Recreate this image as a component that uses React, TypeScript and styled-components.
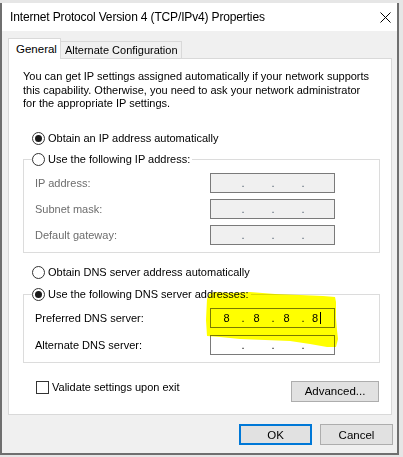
import React from 'react';
import styled, { createGlobalStyle } from 'styled-components';

const GlobalStyle = createGlobalStyle`
  html, body {
    margin: 0;
    padding: 0;
  }
  body {
    width: 403px;
    height: 457px;
    overflow: hidden;
    background: #e6e6e6;
    font-family: 'Liberation Sans', Arial, sans-serif;
    font-size: 11px;
    color: #000;
  }
`;

const Screen = styled.div`
  width: 403px;
  height: 457px;
  padding-top: 3px;
  box-sizing: border-box;
`;

const Window = styled.div`
  width: 399px;
  height: 452px;
  box-sizing: border-box;
  border: 2px solid #6f6f6f;
  border-top: none;
  display: flex;
  flex-direction: column;
  background: #f0f0f0;
`;

const TitleBar = styled.div`
  height: 28px;
  flex: none;
  display: flex;
  align-items: center;
  justify-content: space-between;
  padding-left: 8px;
  background: #fff;
`;

const Title = styled.span`
  font-size: 12px;
  letter-spacing: -0.15px;
`;

const CloseButton = styled.div`
  width: 24px;
  height: 28px;
  display: flex;
  align-items: center;
  justify-content: center;
`;

const Body = styled.div`
  flex: 1;
  display: flex;
  flex-direction: column;
  padding: 7px 0 0 6px;
`;

const TabStrip = styled.div`
  display: flex;
  align-items: flex-end;
  height: 21px;
  margin-bottom: -1px;
`;

const Tab = styled.div<{ $active?: boolean; $width: number; $pad: number; $size: number }>`
  position: relative;
  z-index: ${(p) => (p.$active ? 1 : 0)};
  width: ${(p) => p.$width}px;
  height: ${(p) => (p.$active ? 21 : 18)}px;
  box-sizing: border-box;
  display: flex;
  align-items: center;
  white-space: nowrap;
  padding-left: ${(p) => p.$pad}px;
  padding-bottom: ${(p) => (p.$active ? 1 : 0)}px;
  border: 1px solid #d9d9d9;
  border-bottom: ${(p) => (p.$active ? 'none' : '1px solid #d9d9d9')};
  border-left: ${(p) => (p.$active ? '1px solid #d9d9d9' : 'none')};
  background: ${(p) => (p.$active ? '#fff' : '#f0f0f0')};
  font-size: ${(p) => p.$size}px;
`;

const Panel = styled.div`
  position: relative;
  width: 384px;
  height: 357px;
  box-sizing: border-box;
  border: 1px solid #d9d9d9;
  background: #fff;
  padding: 11px 11px 0 14px;
  display: flex;
  flex-direction: column;
`;

const Intro = styled.p`
  margin: 0;
  line-height: 13.5px;
`;

const OptionRow = styled.label<{ $top: number }>`
  display: flex;
  align-items: center;
  gap: 3px;
  height: 15px;
  margin: ${(p) => p.$top}px 0 0 9px;
`;

const RadioCircle = styled.span<{ $checked?: boolean }>`
  width: 13px;
  height: 13px;
  box-sizing: border-box;
  border: 1px solid #333;
  border-radius: 50%;
  background: #fff;
  display: flex;
  align-items: center;
  justify-content: center;

  &::after {
    content: '';
    width: 7px;
    height: 7px;
    border-radius: 50%;
    background: ${(p) => (p.$checked ? '#1a1a1a' : 'transparent')};
  }
`;

const Group = styled.fieldset<{ $top: number }>`
  margin: ${(p) => p.$top}px 0 0 0;
  padding: 0;
  border: 1px solid #dcdcdc;
  min-width: 0;
`;

const Legend = styled.legend`
  margin-left: 8px;
  padding: 0 2px 0 0;
  height: 15px;
  display: flex;
  align-items: center;
  gap: 3px;
`;

const Fields = styled.div<{ $gap: number }>`
  display: flex;
  flex-direction: column;
  gap: ${(p) => p.$gap}px;
  padding: 6px 0 7px 11px;
`;

const FieldRow = styled.div`
  display: grid;
  grid-template-columns: 175px 125px;
  align-items: center;
  height: 20px;
`;

const FieldLabel = styled.span<{ $disabled?: boolean }>`
  color: ${(p) => (p.$disabled ? '#6d6d6d' : '#000')};
`;

const AddressBox = styled.div<{ $disabled?: boolean }>`
  width: 125px;
  height: 20px;
  box-sizing: border-box;
  border: 1px solid #7a7a7a;
  background: ${(p) => (p.$disabled ? '#f0f0f0' : '#fff')};
  display: grid;
  grid-template-columns: 24px 6px 24px 6px 24px 6px 24px;
  align-items: center;
  padding-left: 5px;
  line-height: 18px;
`;

const Octet = styled.span`
  padding-right: 3px;
  display: flex;
  align-items: center;
  justify-content: center;
`;

const Dot = styled.span<{ $disabled?: boolean }>`
  text-align: center;
  color: ${(p) => (p.$disabled ? '#4a5a6a' : '#000')};
`;

const Caret = styled.span`
  width: 1px;
  height: 12px;
  margin-left: 2px;
  background: #000;
`;

const BottomRow = styled.div`
  display: flex;
  justify-content: space-between;
  align-items: flex-start;
  margin-top: 18px;
  padding-right: 1px;
`;

const CheckRow = styled.label`
  display: flex;
  align-items: center;
  gap: 3px;
  margin: 0 0 0 13px;
  height: 13px;
`;

const CheckBox = styled.span`
  width: 13px;
  height: 13px;
  box-sizing: border-box;
  border: 1px solid #333;
  background: #fff;
`;

const Button = styled.div<{ $width: number; $default?: boolean }>`
  width: ${(p) => p.$width}px;
  height: 21px;
  box-sizing: border-box;
  border: ${(p) => (p.$default ? '2px solid #0078d7' : '1px solid #adadad')};
  background: #e1e1e1;
  display: flex;
  align-items: center;
  justify-content: center;
  font-size: 11.5px;
`;

const Footer = styled.div`
  display: flex;
  justify-content: flex-end;
  gap: 8px;
  margin-top: 9px;
  width: 385px;
`;

const Highlight = styled.svg`
  position: absolute;
  left: 196px;
  top: 231px;
  width: 135px;
  height: 60px;
  mix-blend-mode: multiply;
  pointer-events: none;
`;

function AddressInput({ values, disabled, caret }: { values?: string[]; disabled?: boolean; caret?: boolean }) {
  const parts = values ?? ['', '', '', ''];
  return (
    <AddressBox $disabled={disabled}>
      {parts.map((v, i) => (
        <React.Fragment key={i}>
          <Octet>
            {v}
            {caret && i === 3 && <Caret />}
          </Octet>
          {i < 3 && <Dot $disabled={disabled}>.</Dot>}
        </React.Fragment>
      ))}
    </AddressBox>
  );
}

export default function App() {
  return (
    <>
      <GlobalStyle />
      <Screen>
        <Window>
          <TitleBar>
            <Title>Internet Protocol Version 4 (TCP/IPv4) Properties</Title>
            <CloseButton>
              <svg width="11" height="11" viewBox="0 0 11 11">
                <path d="M0.5 0.5 L10.5 10.5 M10.5 0.5 L0.5 10.5" stroke="#000" strokeWidth="1" fill="none" />
              </svg>
            </CloseButton>
          </TitleBar>
          <Body>
            <TabStrip>
              <Tab $active $width={53} $pad={7} $size={11.5}>General</Tab>
              <Tab $width={121} $pad={4} $size={11}>Alternate Configuration</Tab>
            </TabStrip>
            <Panel>
              <Intro>
                You can get IP settings assigned automatically if your network supports
                <br />
                this capability. Otherwise, you need to ask your network administrator
                <br />
                for the appropriate IP settings.
              </Intro>

              <OptionRow $top={20}>
                <RadioCircle $checked />
                Obtain an IP address automatically
              </OptionRow>

              <Group $top={6}>
                <Legend>
                  <RadioCircle />
                  Use the following IP address:
                </Legend>
                <Fields $gap={6}>
                  <FieldRow>
                    <FieldLabel $disabled>IP address:</FieldLabel>
                    <AddressInput disabled />
                  </FieldRow>
                  <FieldRow>
                    <FieldLabel $disabled>Subnet mask:</FieldLabel>
                    <AddressInput disabled />
                  </FieldRow>
                  <FieldRow>
                    <FieldLabel $disabled>Default gateway:</FieldLabel>
                    <AddressInput disabled />
                  </FieldRow>
                </Fields>
              </Group>

              <OptionRow $top={12}>
                <RadioCircle />
                Obtain DNS server address automatically
              </OptionRow>

              <Group $top={7}>
                <Legend>
                  <RadioCircle $checked />
                  Use the following DNS server addresses:
                </Legend>
                <Fields $gap={7}>
                  <FieldRow>
                    <FieldLabel>Preferred DNS server:</FieldLabel>
                    <AddressInput values={['8', '8', '8', '8']} caret />
                  </FieldRow>
                  <FieldRow>
                    <FieldLabel>Alternate DNS server:</FieldLabel>
                    <AddressInput />
                  </FieldRow>
                </Fields>
              </Group>

              <BottomRow>
                <CheckRow>
                  <CheckBox />
                  Validate settings upon exit
                </CheckRow>
                <Button $width={88}>Advanced...</Button>
              </BottomRow>

              <Highlight viewBox="0 0 135 60">
                <path
                  d="M2 9 L4 4 L9 2 L25 3 L45 2 L70 4 L95 5 L118 6 L130 7 L131 12 L131 28 L132 40 L133 49 L131 57 L122 57 L105 54 L85 51 L60 50 L35 49 L15 47 L2 46 L1 30 Z"
                  fill="#ffff00"
                />
              </Highlight>
            </Panel>
            <Footer>
              <Button $width={73} $default>OK</Button>
              <Button $width={73}>Cancel</Button>
            </Footer>
          </Body>
        </Window>
      </Screen>
    </>
  );
}
